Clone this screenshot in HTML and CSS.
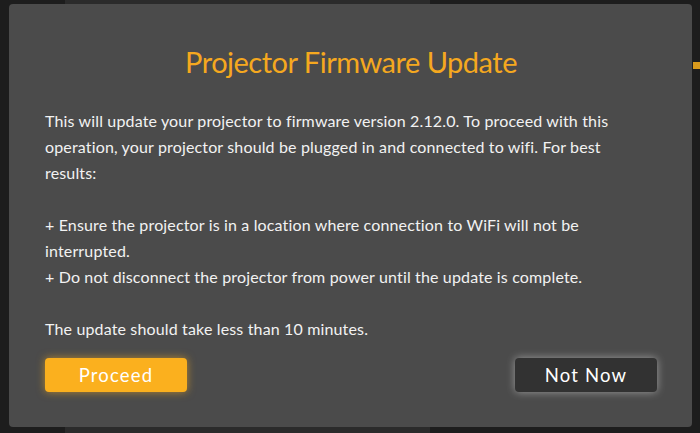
FILE: index.html
```html
<!DOCTYPE html>
<html lang="en">
<head>
    <meta charset="UTF-8">
    <meta name="viewport" content="width=device-width, initial-scale=1.0">
    <title>Projector Firmware Update</title>
    <link rel="stylesheet" href="styles.css">
</head>
<body>
<div class="backdrop">
    <div class="dialog">
        <h2 class="dialog-title">Projector Firmware Update</h2>
        <p class="dialog-text">
            This will update your projector to firmware version 2.12.0. To proceed with this<br>
            operation, your projector should be plugged in and connected to wifi. For best<br>
            results:<br><br>
            + Ensure the projector is in a location where connection to WiFi will not be<br>
            interrupted.<br>
            + Do not disconnect the projector from power until the update is complete.<br><br>
            The update should take less than 10 minutes.
        </p>
        <div class="dialog-actions">
            <button class="btn btn-proceed">Proceed</button>
            <button class="btn btn-cancel">Not Now</button>
        </div>
    </div>
    <div class="side-mark"></div>
</div>
</body>
</html>
```

FILE: styles.css
```css
body {
    margin: 0;
    background-color: #1d1d1d;
    font-family: Lato, "Open Sans", sans-serif;
}
.backdrop {
    position: relative;
    height: 433px;
    box-sizing: border-box;
    padding: 4px 8px 6px 9px;
    background: linear-gradient(to right, #1d1d1d 65px, #2b2b2b 65px, #2b2b2b 430px, #1d1d1d 430px);
}
.dialog {
    height: 100%;
    box-sizing: border-box;
    background-color: #4b4b4b;
    border-radius: 4px;
    padding: 38px 35px 35px 36px;
    display: flex;
    flex-direction: column;
}
.dialog-title {
    margin: 0;
    text-align: center;
    color: #f5a81f;
    font-weight: 400;
    font-size: 29px;
    line-height: 40px;
    letter-spacing: -0.5px;
}
.dialog-text {
    margin: 26px 0 0 0;
    color: #f2f2f2;
    font-size: 16px;
    line-height: 26px;
    letter-spacing: 0.15px;
    white-space: nowrap;
    flex: 1;
}
.dialog-actions {
    display: flex;
    justify-content: space-between;
}
.btn {
    width: 142px;
    height: 34px;
    border: none;
    border-radius: 4px;
    color: #ffffff;
    font-family: Lato, "Open Sans", sans-serif;
    font-size: 18.5px;
    letter-spacing: 1.2px;
    cursor: pointer;
}
.btn-proceed {
    background-color: #fbb01e;
    box-shadow: 0 0 8px rgba(251, 176, 30, 0.6);
}
.btn-cancel {
    background-color: #323232;
    box-shadow: 0 0 8px rgba(255, 255, 255, 0.45);
}
.side-mark {
    position: absolute;
    right: 0;
    top: 62px;
    width: 7px;
    height: 7px;
    background-color: #d99a1c;
}
```
